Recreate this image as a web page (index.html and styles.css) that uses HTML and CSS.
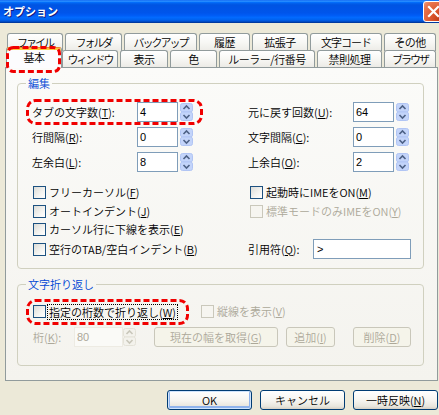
FILE: index.html
```html
<!DOCTYPE html>
<html lang="ja">
<head>
<meta charset="utf-8">
<title>オプション</title>
<link rel="stylesheet" href="styles.css">
</head>
<body>
<div class="window">
  <div class="titlebar">
    <span class="title">オプション</span>
    <span class="close"><svg width="13" height="13" viewBox="0 0 13 13"><path d="M2 2 L11 11 M11 2 L2 11" stroke="#fff" stroke-width="2.2" stroke-linecap="square"/></svg></span>
  </div>
  <div class="client">
    <div class="tabs">
      <div class="tabrow back">
        <div class="tab kana w-file">ファイル</div>
        <div class="tab kana w-folder">フォルダ</div>
        <div class="tab kana w-backup">バックアップ</div>
        <div class="tab w-hist">履歴</div>
        <div class="tab w-ext">拡張子</div>
        <div class="tab mid w-code">文字コード</div>
        <div class="tab w-other">その他</div>
      </div>
      <div class="tabrow front">
        <div class="tab sel">基本</div>
        <div class="tab kana w-win">ウィンドウ</div>
        <div class="tab w-disp">表示</div>
        <div class="tab w-color">色</div>
        <div class="tab w-ruler">ルーラー/行番号</div>
        <div class="tab w-kinsoku">禁則処理</div>
        <div class="tab kana w-browser">ブラウザ</div>
      </div>
    </div>
    <div class="panel">
      <fieldset class="group g1">
        <legend>編集</legend>
        <div class="spins">
          <div class="field"><span class="lbl">タブの文字数(<u>T</u>):</span><span class="edit">4</span><svg class="spin" width="13" height="18" viewBox="0 0 13 18"><rect x="0.5" y="0.5" width="12" height="8.5" rx="2" class="sp-bg"/><rect x="0.5" y="9" width="12" height="8.5" rx="2" class="sp-bg"/><path d="M3.5 6 L6.5 3 L9.5 6 M3.5 12 L6.5 15 L9.5 12" class="sp-ar"/></svg></div>
          <div class="field"><span class="lbl">元に戻す回数(<u>U</u>):</span><span class="edit">64</span><svg class="spin" width="13" height="18" viewBox="0 0 13 18"><rect x="0.5" y="0.5" width="12" height="8.5" rx="2" class="sp-bg"/><rect x="0.5" y="9" width="12" height="8.5" rx="2" class="sp-bg"/><path d="M3.5 6 L6.5 3 L9.5 6 M3.5 12 L6.5 15 L9.5 12" class="sp-ar"/></svg></div>
          <div class="field"><span class="lbl">行間隔(<u>R</u>):</span><span class="edit">0</span><svg class="spin" width="13" height="18" viewBox="0 0 13 18"><rect x="0.5" y="0.5" width="12" height="8.5" rx="2" class="sp-bg"/><rect x="0.5" y="9" width="12" height="8.5" rx="2" class="sp-bg"/><path d="M3.5 6 L6.5 3 L9.5 6 M3.5 12 L6.5 15 L9.5 12" class="sp-ar"/></svg></div>
          <div class="field"><span class="lbl">文字間隔(<u>C</u>):</span><span class="edit">0</span><svg class="spin" width="13" height="18" viewBox="0 0 13 18"><rect x="0.5" y="0.5" width="12" height="8.5" rx="2" class="sp-bg"/><rect x="0.5" y="9" width="12" height="8.5" rx="2" class="sp-bg"/><path d="M3.5 6 L6.5 3 L9.5 6 M3.5 12 L6.5 15 L9.5 12" class="sp-ar"/></svg></div>
          <div class="field"><span class="lbl">左余白(<u>L</u>):</span><span class="edit">8</span><svg class="spin" width="13" height="18" viewBox="0 0 13 18"><rect x="0.5" y="0.5" width="12" height="8.5" rx="2" class="sp-bg"/><rect x="0.5" y="9" width="12" height="8.5" rx="2" class="sp-bg"/><path d="M3.5 6 L6.5 3 L9.5 6 M3.5 12 L6.5 15 L9.5 12" class="sp-ar"/></svg></div>
          <div class="field"><span class="lbl">上余白(<u>O</u>):</span><span class="edit">2</span><svg class="spin" width="13" height="18" viewBox="0 0 13 18"><rect x="0.5" y="0.5" width="12" height="8.5" rx="2" class="sp-bg"/><rect x="0.5" y="9" width="12" height="8.5" rx="2" class="sp-bg"/><path d="M3.5 6 L6.5 3 L9.5 6 M3.5 12 L6.5 15 L9.5 12" class="sp-ar"/></svg></div>
        </div>
        <div class="checks">
          <div class="check"><span class="box"></span><span>フリーカーソル(<u>F</u>)</span></div>
          <div class="check"><span class="box"></span><span>起動時にIMEをON(<u>M</u>)</span></div>
          <div class="check"><span class="box"></span><span>オートインデント(<u>J</u>)</span></div>
          <div class="check disabled"><span class="box"></span><span>標準モードのみIMEをON(<u>Y</u>)</span></div>
          <div class="check"><span class="box"></span><span>カーソル行に下線を表示(<u>E</u>)</span></div>
          <div class="empty"></div>
          <div class="check"><span class="box"></span><span>空行のTAB/空白インデント(<u>B</u>)</span></div>
          <div class="quote"><span class="qlbl">引用符(<u>Q</u>):</span><span class="edit qedit">&gt;</span></div>
        </div>
      </fieldset>
      <fieldset class="group g2">
        <legend>文字折り返し</legend>
        <div class="wrap-row">
          <div class="check wcheck"><span class="box"></span><span class="focus">指定の桁数で折り返し(<u>W</u>)</span></div>
          <div class="check disabled"><span class="box"></span><span>縦線を表示(<u>V</u>)</span></div>
        </div>
        <div class="col-row">
          <span class="col-lbl">桁(<u>K</u>):</span>
          <span class="edit dis-edit">80</span>
          <svg class="spin dspin" width="13" height="18" viewBox="0 0 13 18"><rect x="0.5" y="0.5" width="12" height="8.5" rx="2" class="sp-bg"/><rect x="0.5" y="9" width="12" height="8.5" rx="2" class="sp-bg"/><path d="M3.5 6 L6.5 3 L9.5 6 M3.5 12 L6.5 15 L9.5 12" class="sp-ar"/></svg>
          <span class="btn dis b-get">現在の幅を取得(<u>G</u>)</span>
          <span class="btn dis b-add">追加(<u>I</u>)</span>
          <span class="btn dis b-del">削除(<u>D</u>)</span>
        </div>
      </fieldset>
    </div>
    <div class="buttons">
      <span class="btn main default">OK</span>
      <span class="btn main">キャンセル</span>
      <span class="btn main">一時反映(<u>N</u>)</span>
    </div>
  </div>
  <svg class="marks" width="439" height="415" viewBox="0 0 439 415">
    <rect x="7.5" y="47.5" width="52" height="24" rx="6"/>
    <rect x="27.5" y="100.5" width="174" height="23" rx="8"/>
    <rect x="27.5" y="300.5" width="160" height="23" rx="8"/>
  </svg>
</div>
</body>
</html>
```

FILE: styles.css
```css
* { box-sizing: border-box; }
html, body { margin: 0; padding: 0; }
body {
  width: 439px;
  height: 415px;
  overflow: hidden;
  background: #ECE9D8;
  font-family: "Noto Sans CJK JP", "Liberation Sans", sans-serif;
  font-size: 11px;
  font-weight: 350;
  line-height: 13px;
  color: #000;
}
u { text-decoration: underline; text-underline-offset: 1px; }

.window {
  position: relative;
  width: 439px;
  height: 415px;
  overflow: hidden;
  display: flex;
  flex-direction: column;
}

/* title bar */
.titlebar {
  flex: none;
  height: 23px;
  display: flex;
  align-items: center;
  justify-content: space-between;
  padding-left: 3px;
  background: linear-gradient(to bottom, #0058EE 0%, #3593FF 4%, #288EFF 6%, #127DFF 8%, #036FFC 10%, #0262EE 14%, #0057E5 20%, #0054E3 24%, #0055EB 56%, #005BF5 66%, #026AFE 76%, #0062EF 86%, #0052D6 92%, #0040AB 96%, #003092 100%);
}
.title {
  color: #fff;
  font-weight: bold;
  font-size: 11px;
  text-shadow: 1px 1px 0 #0F1B7C;
}
.close {
  width: 21px;
  height: 21px;
  margin-right: -5px;
  border: 1px solid #fff;
  border-radius: 3px;
  background: radial-gradient(circle at 85% 90%, #C13A14 0%, #D9532B 35%, #E9764F 80%, #F19C7E 100%);
  display: flex;
  align-items: center;
  justify-content: center;
}

/* client area */
.client {
  flex: 1;
  padding: 10px 0 0 5px;
}

.tabs { display: flex; flex-direction: column; }
.tabrow { display: flex; gap: 2px; height: 17px; }
.back { padding-left: 2px; }
.front { padding-left: 3px; }

.tab {
  flex: none;
  height: 17px;
  border: 1px solid #919B9C;
  border-bottom: none;
  border-radius: 3px 3px 0 0;
  background: linear-gradient(to bottom, #FFFFFF 0%, #F7F7F4 50%, #ECEBE6 100%);
  display: flex;
  align-items: center;
  justify-content: center;
  white-space: nowrap;
  letter-spacing: -0.5px;
  overflow: hidden;
}
.tab.kana { letter-spacing: -2px; }
.tab.mid { letter-spacing: -1px; }
.back .tab { height: 18px; }
.w-file { width: 56px; }
.w-folder { width: 57px; }
.w-backup { width: 73px; }
.w-hist { width: 51px; }
.w-ext { width: 56px; }
.w-code { width: 72px; }
.w-other { width: 52px; }

.w-win { width: 56px; }
.w-disp { width: 48px; }
.w-color { width: 47px; }
.w-ruler { width: 96px; }
.w-kinsoku { width: 65px; }
.w-browser { width: 52px; }

.tab.sel {
  position: relative;
  z-index: 1;
  width: 56px;
  height: 21px;
  margin: -3px -2px -1px -2px;
  align-items: flex-start;
  padding-top: 3px;
  background: #FCFCFE;
  border-top: 1px solid #E68B2C;
  box-shadow: inset 0 2px 0 #FFC73C;
}

/* tab page */
.panel {
  width: 433px;
  height: 314px;
  border: 1px solid #919B9C;
  background: linear-gradient(to bottom, #FBFBF9 0%, #F4F3EE 100%);
  padding: 0 13px 0 11px;
}

.group {
  margin: 8px 0 0 0;
  padding: 0;
  width: 407px;
  min-width: 0;
  border: 1px solid #D0D0BF;
  border-radius: 4px;
}
.group legend {
  margin-left: 8px;
  padding: 0 2px;
  color: #0046D5;
  line-height: 14px;
  font-size: 11px;
}

.g1 { padding: 12px 0 9px 0; }

.spins {
  display: grid;
  grid-template-columns: 216px 1fr;
  row-gap: 5px;
  padding-left: 14px;
}
.field { display: flex; align-items: center; height: 20px; }
.lbl { width: 105px; white-space: nowrap; }
.edit {
  width: 41px;
  height: 20px;
  border: 1px solid #7F9DB9;
  background: #fff;
  padding-left: 2px;
  line-height: 18px;
  font-family: "Liberation Sans", sans-serif;
  font-weight: 400;
}
.spin { margin-left: 2px; flex: none; }
.sp-bg { fill: #C3D4FA; stroke: #B1C5F4; stroke-width: 1; }
.sp-ar { fill: none; stroke: #4D6185; stroke-width: 1.6; }
.dspin .sp-bg { fill: #F3F2EC; stroke: #E4E2D8; }
.dspin .sp-ar { stroke: #C9C7BA; }

.checks {
  margin-top: 11px;
  padding-left: 15px;
  display: grid;
  grid-template-columns: 217px 1fr;
  grid-template-rows: 19px 18px 19px 20px;
}
.check { display: flex; align-items: center; gap: 3px; white-space: nowrap; }
.box {
  flex: none;
  width: 13px;
  height: 13px;
  border: 1px solid #1C5180;
  background: linear-gradient(135deg, #DCDCD7 0%, #F4F4F1 60%, #FFFFFF 100%);
}
.check.disabled { color: #ACA899; }
.check.disabled .box { border-color: #CAC8BB; background: #F6F5F0; }

.quote { display: flex; align-items: center; margin-left: -2px; }
.qlbl { width: 65px; white-space: nowrap; }
.qedit { width: 98px; padding-left: 3px; }

.g2 { margin-top: 8px; padding: 11px 0 18px 0; }
.wrap-row {
  display: flex;
  align-items: center;
  height: 19px;
  padding-left: 15px;
}
.wcheck { width: 168px; gap: 1px; }
.focus { border: 1px dotted #000; padding: 0 1px; line-height: 14px; }

.col-row {
  margin-top: 6px;
  display: flex;
  align-items: center;
  height: 20px;
  padding-left: 15px;
}
.col-lbl { width: 41px; color: #ACA899; white-space: nowrap; }
.dis-edit {
  width: 49px;
  border-color: #EDEBE3;
  background: #FAFAF7;
  color: #ACA899;
}
.dspin { margin-left: 0; }

.btn {
  flex: none;
  height: 20px;
  border: 1px solid #003C74;
  border-radius: 3px;
  background: linear-gradient(to bottom, #FFFFFF 0%, #F5F4EF 55%, #E8E6DD 85%, #D6D0C5 100%);
  display: flex;
  align-items: center;
  justify-content: center;
  white-space: nowrap;
}
.btn.dis {
  border-color: #C9C7BA;
  background: #F5F4EA;
  color: #ACA899;
}
.b-get { width: 124px; margin-left: 18px; }
.b-add { width: 49px; margin-left: 8px; }
.b-del { width: 58px; margin-left: 18px; }

.buttons {
  width: 433px;
  margin-top: 9px;
  display: flex;
  justify-content: flex-end;
  gap: 8px;
}
.btn.main { width: 85px; }
.btn.default { box-shadow: inset 0 0 0 1px #CEE3FC, inset 0 -1px 0 2px #8FB3EC; }

/* red annotation marks */
.marks {
  position: absolute;
  left: 0;
  top: 0;
  pointer-events: none;
  z-index: 5;
}
.marks rect {
  fill: none;
  stroke: #F00000;
  stroke-width: 3;
  stroke-dasharray: 6 3;
}
```
